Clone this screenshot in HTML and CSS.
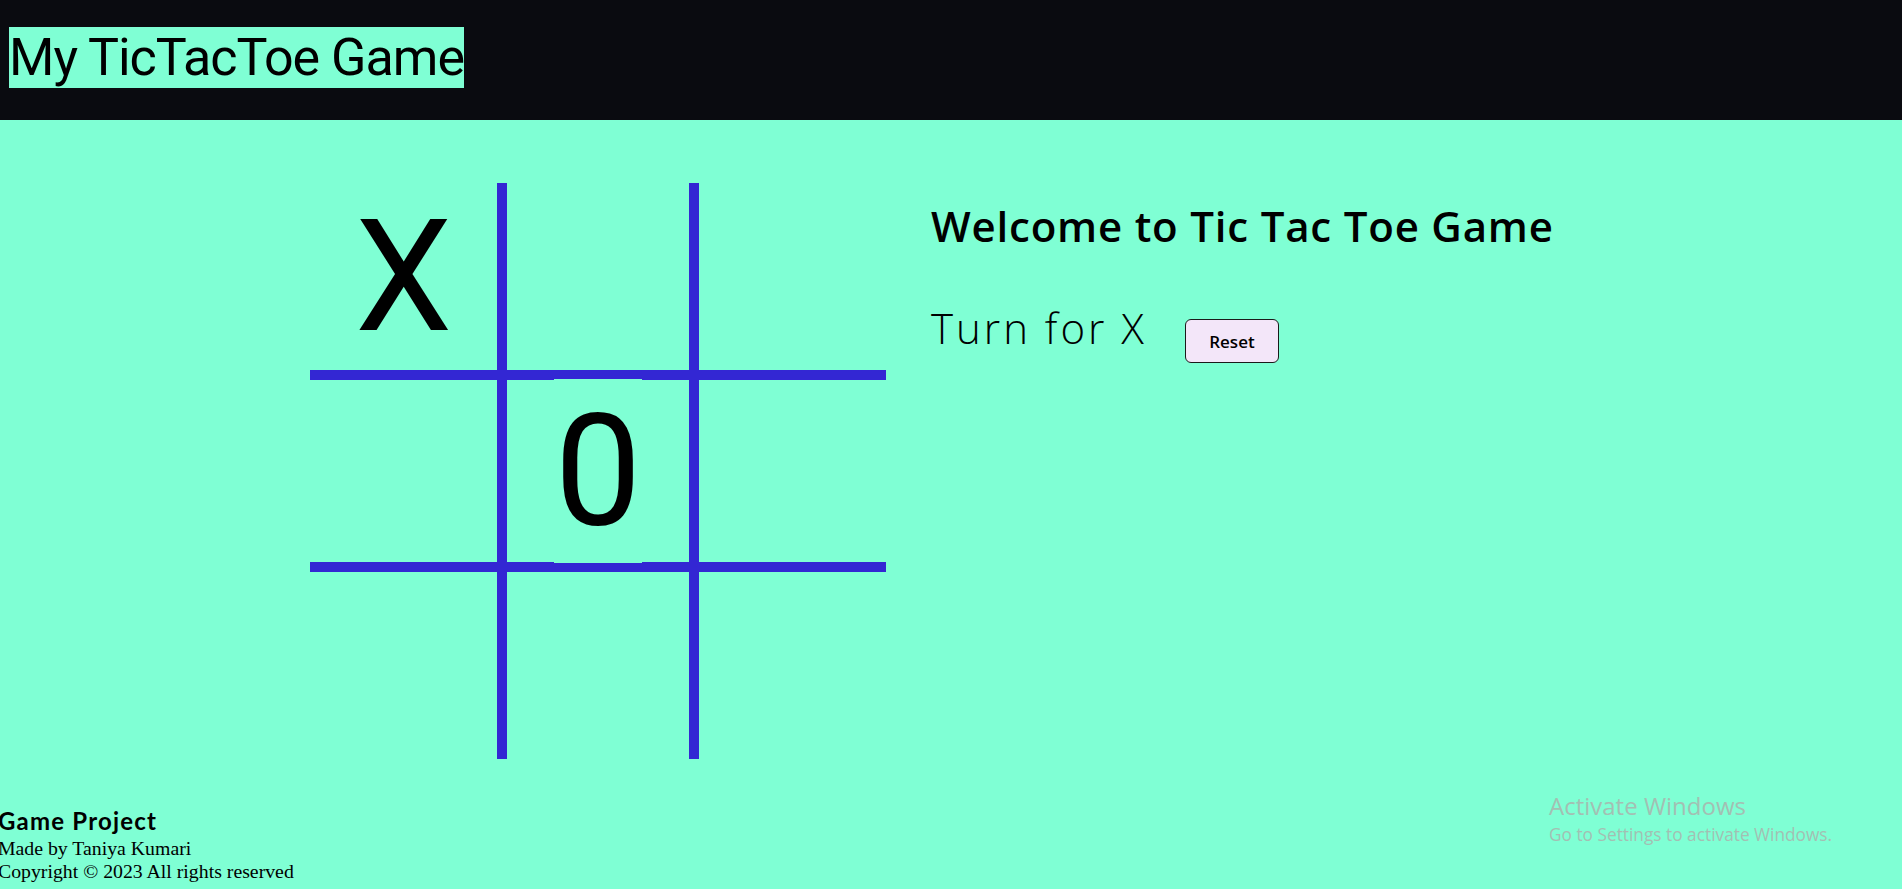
FILE: index.html
```html
<!DOCTYPE html>
<html lang="en">
<head>
<meta charset="utf-8">
<title>My TicTacToe Game</title>
<link rel="stylesheet" href="styles.css">
</head>
<body>
<nav class="topbar">
  <h1 class="brand">My TicTacToe Game</h1>
</nav>
<main class="game">
  <div class="board">
    <div class="cell line-r line-b"><span class="mark">X</span></div>
    <div class="cell line-r line-b"><span class="mark"></span></div>
    <div class="cell line-b"><span class="mark"></span></div>
    <div class="cell line-r line-b"><span class="mark"></span></div>
    <div class="cell line-r line-b"><span class="mark">0</span></div>
    <div class="cell line-b"><span class="mark"></span></div>
    <div class="cell line-r"><span class="mark"></span></div>
    <div class="cell line-r"><span class="mark"></span></div>
    <div class="cell"><span class="mark"></span></div>
  </div>
  <div class="info">
    <h2 class="welcome">Welcome to Tic Tac Toe Game</h2>
    <div class="turn-row">
      <span class="turn">Turn for X</span>
      <button class="reset">Reset</button>
    </div>
  </div>
</main>
<footer class="footer">
  <h3 class="footer-title">Game Project</h3>
  <p class="footer-line">Made by Taniya Kumari</p>
  <p class="footer-line">Copyright © 2023 All rights reserved</p>
</footer>
<div class="watermark">
  <div class="wm-title">Activate Windows</div>
  <div class="wm-sub">Go to Settings to activate Windows.</div>
</div>
</body>
</html>
```
FILE: styles.css
```css
* { box-sizing: border-box; }

html, body {
  margin: 0;
  padding: 0;
}

body {
  background: #7fffd4;
  font-family: "Liberation Serif", serif;
  min-height: 889px;
  position: relative;
  overflow: hidden;
}

.topbar {
  background: #0a0b10;
  height: 120px;
  padding: 27px 9px 0;
}

.brand {
  display: inline-block;
  margin: 0;
  background: #7fffd4;
  color: #000;
  font-family: Roboto, sans-serif;
  font-weight: 400;
  font-size: 52px;
  letter-spacing: -1px;
  line-height: 61px;
  height: 61px;
}

.game {
  display: flex;
  align-items: flex-start;
  gap: 45px;
  padding-left: 310px;
  margin-top: 63px;
}

.board {
  display: grid;
  grid-template-columns: 197px 192px 187px;
  grid-template-rows: 197px 192px 187px;
}

.cell {
  display: flex;
  align-items: center;
  justify-content: center;
  border-color: #3327d3;
  border-style: solid;
  border-width: 0;
}

.line-r { border-right-width: 10px; }
.line-b { border-bottom-width: 10px; }

.mark {
  background: #7fffd4;
  font-family: Roboto, sans-serif;
  font-size: 155px;
  line-height: 184px;
  height: 184px;
  color: #000;
  flex-shrink: 0;
}

.info {
  padding-top: 14px;
}

.welcome {
  margin: 0;
  font-family: "Open Sans", sans-serif;
  font-weight: 600;
  font-size: 42px;
  letter-spacing: 0.8px;
  line-height: 57px;
  color: #000;
}

.turn-row {
  display: flex;
  align-items: flex-start;
  gap: 38px;
  margin-top: 45px;
}

.turn {
  font-family: "Open Sans", sans-serif;
  font-weight: 300;
  font-size: 42px;
  letter-spacing: 3px;
  line-height: 57px;
  color: #000;
}

.reset {
  margin-top: 20px;
  width: 94px;
  height: 44px;
  padding: 0;
  background: #f3e6f9;
  border: 1.5px solid #1a1a1a;
  border-radius: 6px;
  font-family: "Open Sans", sans-serif;
  font-weight: 600;
  font-size: 17px;
  color: #000;
}

.footer {
  margin-top: 47px;
  margin-left: -2px;
  color: #000;
}

.footer-title {
  margin: 0 0 2px;
  font-family: Lato, sans-serif;
  font-weight: 700;
  font-size: 24px;
  letter-spacing: 1.2px;
  line-height: 29px;
}

.footer-line {
  margin: 0;
  font-family: "Liberation Serif", serif;
  font-size: 19.8px;
  line-height: 23px;
}

.watermark {
  position: absolute;
  left: 1549px;
  top: 794px;
  color: #a3bfb3;
  font-family: "Open Sans", sans-serif;
}

.wm-title {
  font-size: 24px;
  line-height: 24px;
}

.wm-sub {
  margin-top: 8px;
  font-size: 17.3px;
  line-height: 18px;
}
```
